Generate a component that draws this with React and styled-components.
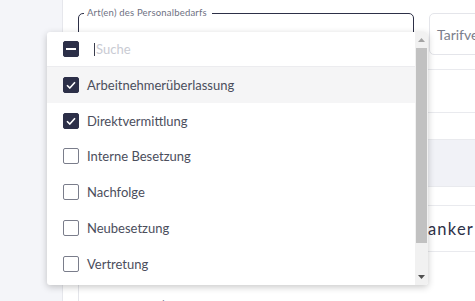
import React from "react";
import styled, { createGlobalStyle } from "styled-components";

const GlobalStyle = createGlobalStyle`
  html, body {
    margin: 0;
    padding: 0;
    height: 301px;
    overflow: hidden;
    background: #f4f5f9;
    font-family: Lato, "Open Sans", sans-serif;
  }
`;

const Page = styled.div`
  display: flex;
  height: 301px;
  position: relative;
  overflow: hidden;
`;

const Gutter = styled.div`
  width: 62px;
  flex-shrink: 0;
`;

const Panel = styled.div`
  flex: 1;
  background: #fff;
  border-left: 1px solid #e6e7ec;
  padding: 13px 0 0 15px;
  display: flex;
  flex-direction: column;
  min-width: 0;
  & > * {
    flex-shrink: 0;
  }
`;

const FieldRow = styled.div`
  display: grid;
  grid-template-columns: 336px 300px;
  column-gap: 15px;
`;

const Outlined = styled.div`
  height: 42px;
  border: 1.5px solid ${(p) => (p.$active ? "#2d3047" : "#e4e5ea")};
  border-radius: 5px;
  box-sizing: border-box;
  position: relative;
  display: flex;
  align-items: center;
  padding: 0 7px;
  font-size: 14px;
  color: #7b7e8c;
`;

const Legend = styled.span`
  position: absolute;
  top: -8px;
  left: 5px;
  background: #fff;
  padding: 0 5px 0 3px;
  font-size: 9.5px;
  letter-spacing: 0.2px;
  line-height: 13px;
  color: #6e7182;
`;

const Line = styled.div`
  height: ${(p) => p.$h}px;
  border-bottom: 1px solid #e9eaee;
  background: ${(p) => (p.$gray ? "#f1f2f7" : "transparent")};
`;

const Heading = styled.div`
  height: 45px;
  display: flex;
  align-items: center;
  justify-content: flex-end;
  padding-right: 1px;
  font-size: 16.5px;
  letter-spacing: 1.2px;
  color: #2d3047;
  border-bottom: 1px solid #e9eaee;
  white-space: nowrap;
`;

const Toolbar = styled.div`
  margin-top: 32px;
  border-left: 1px solid #e4e5ea;
  height: 30px;
  display: flex;
  gap: 14px;
  padding: 14px 0 0 14px;
  font-size: 13px;
  color: #6e7182;
`;

const Menu = styled.div`
  position: absolute;
  left: 47px;
  top: 32px;
  width: 381px;
  height: 253px;
  background: #fff;
  border-radius: 3px;
  box-shadow: 0 2px 7px rgba(0, 0, 0, 0.22);
  display: flex;
  overflow: hidden;
`;

const List = styled.div`
  flex: 1;
  display: flex;
  flex-direction: column;
`;

const SearchRow = styled.div`
  height: 34px;
  flex-shrink: 0;
  display: flex;
  align-items: center;
  padding-left: 16px;
  gap: 15px;
  border-bottom: 1px solid #ececef;
`;

const Placeholder = styled.span`
  font-size: 13px;
  color: #c9cbd3;
  border-left: 1px solid #3a3d4d;
  padding-left: 1px;
  line-height: 13px;
`;

const Option = styled.div`
  height: 35.8px;
  flex-shrink: 0;
  display: flex;
  align-items: center;
  padding-left: 16px;
  gap: 8px;
  font-size: 13px;
  color: #4b4e5c;
  background: ${(p) => (p.$hover ? "#f5f5f6" : "#fff")};
`;

const Box = styled.span`
  width: 16px;
  height: 16px;
  box-sizing: border-box;
  border-radius: 2px;
  border: 1.5px solid ${(p) => (p.$on ? "#2c2f48" : "#7a7d8b")};
  background: ${(p) => (p.$on ? "#2c2f48" : "#fff")};
  display: flex;
  align-items: center;
  justify-content: center;
  flex-shrink: 0;
`;

const Scrollbar = styled.div`
  width: 13px;
  background: #f1f1f1;
  display: flex;
  flex-direction: column;
  align-items: center;
`;

const Arrow = styled.div`
  height: 16px;
  display: flex;
  align-items: center;
  justify-content: center;
`;

const Thumb = styled.div`
  width: 11px;
  height: 195px;
  background: #c1c1c1;
`;

const Spacer = styled.div`
  flex: 1;
`;

const options = [
  { label: "Arbeitnehmerüberlassung", on: true, hover: true },
  { label: "Direktvermittlung", on: true },
  { label: "Interne Besetzung" },
  { label: "Nachfolge" },
  { label: "Neubesetzung" },
  { label: "Vertretung" },
];

const Check = () => (
  <svg width="10" height="8" viewBox="0 0 10 8">
    <path d="M1 4.2 L3.8 7 L9 1.2" fill="none" stroke="#fff" strokeWidth="1.6" />
  </svg>
);

const App = () => {
  return (
    <Page>
      <GlobalStyle />
      <Gutter />
      <Panel>
        <FieldRow>
          <Outlined $active>
            <Legend>Art(en) des Personalbedarfs</Legend>
          </Outlined>
          <Outlined>Tarifvertrag</Outlined>
        </FieldRow>
        <Line $h={14} />
        <Line $h={42} />
        <Line $h={26} />
        <Line $h={46} $gray />
        <Line $h={18} />
        <Heading>Vergütung und Gehaltsanker</Heading>
        <Toolbar>
          <span>F</span>
          <span>F</span>
          <span>M</span>
          <span>|</span>
        </Toolbar>
      </Panel>

      <Menu>
        <List>
          <SearchRow>
            <Box $on>
              <svg width="10" height="2" viewBox="0 0 10 2">
                <rect width="10" height="2" fill="#fff" />
              </svg>
            </Box>
            <Placeholder>Suche</Placeholder>
          </SearchRow>
          {options.map((o) => (
            <Option key={o.label} $hover={o.hover}>
              <Box $on={o.on}>{o.on && <Check />}</Box>
              {o.label}
            </Option>
          ))}
        </List>
        <Scrollbar>
          <Arrow>
            <svg width="7" height="4" viewBox="0 0 7 4">
              <path d="M0 4 L3.5 0 L7 4 Z" fill="#a3a3a3" />
            </svg>
          </Arrow>
          <Thumb />
          <Spacer />
          <Arrow>
            <svg width="7" height="4" viewBox="0 0 7 4">
              <path d="M0 0 L3.5 4 L7 0 Z" fill="#505050" />
            </svg>
          </Arrow>
        </Scrollbar>
      </Menu>
    </Page>
  );
};

export default App;
